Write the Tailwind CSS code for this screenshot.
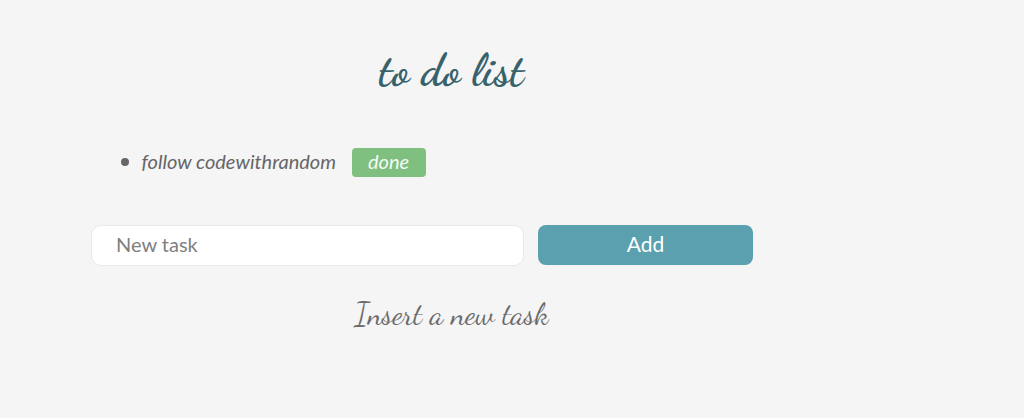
<!DOCTYPE html>
<html lang="en">

<head>
    <meta charset="UTF-8">
    <title>To Do List</title>
    <script src="https://cdn.jsdelivr.net/npm/@tailwindcss/browser@4"></script>
</head>

<body class="bg-[#f5f5f5] h-[418px] overflow-hidden font-['Lato',sans-serif] text-[#666666]">
    <div class="w-[721px] ml-[91px] pt-[44px]">
        <h1 class="text-center text-[45.5px] leading-[54px] font-bold text-[#38626b] font-['Dancing_Script',cursive]">to do list</h1>

        <ul class="mt-[49px] pl-[30px] flex flex-col">
            <li class="flex items-center h-[30px]">
                <span class="w-[8px] h-[8px] rounded-full bg-[#666666]"></span>
                <span class="ml-[12.5px] text-[20px] italic leading-[26px] pb-[2px]">follow codewithrandom</span>
                <button class="ml-[15.5px] w-[74px] h-[29px] rounded-[4px] bg-[#7fbf7f] text-[#f4fbf4] text-[20px] leading-[26px] italic font-normal pb-[2px]">done</button>
            </li>
        </ul>

        <form class="mt-[48px] flex items-start">
            <input class="w-[433px] h-[41px] pl-[24px] pr-[25px] pb-[3px] rounded-[10px] bg-white border border-[#e9e9e9] text-[20px] placeholder:text-[#808080] outline-none" type="text" placeholder="New task">
            <button class="ml-[14px] w-[215px] h-[40px] rounded-[8px] bg-[#5aa0ae] text-white text-[21px] leading-[36px] pb-[2px]" type="button">Add</button>
        </form>

        <p class="mt-[29px] text-center text-[30.5px] leading-[40px] text-[#6a6a6a] font-['Dancing_Script',cursive]">Insert a new task</p>
    </div>
</body>

</html>
